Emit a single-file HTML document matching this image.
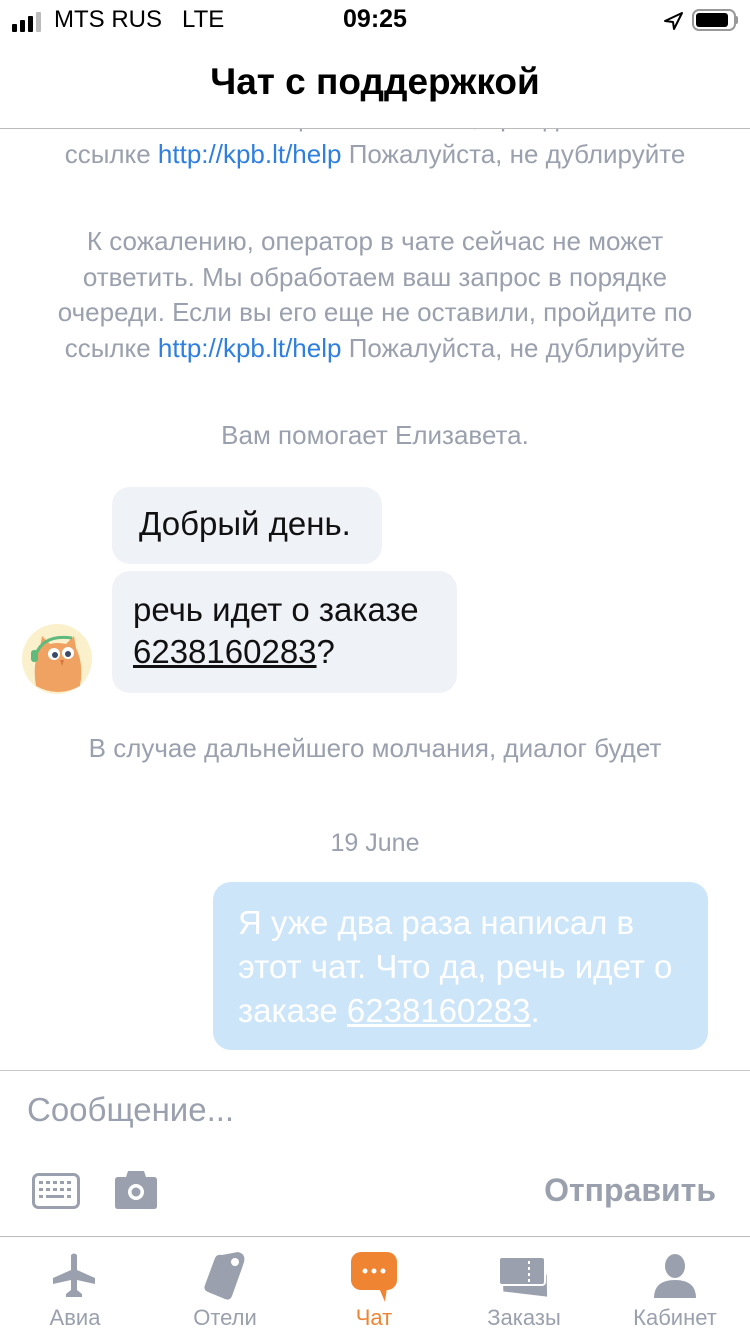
<!DOCTYPE html>
<html><head><meta charset="utf-8"><style>
*{margin:0;padding:0;box-sizing:border-box}
body{width:750px;height:1334px;background:#fff;font-family:"Liberation Sans","DejaVu Sans",sans-serif;position:relative;overflow:hidden}
.abs{position:absolute}
.sys{position:absolute;left:0;width:750px;text-align:center;color:#9aa0ad;font-size:26px;line-height:35.5px;white-space:nowrap}
.sys a{color:#2f7fe0;text-decoration:none}
.bub{position:absolute;background:#eff2f7;border-radius:18px;font-size:33px;line-height:42px;color:#111;white-space:nowrap}
.tab{position:absolute;top:1305px;width:150px;text-align:center;font-size:22px;color:#9aa0ad}
</style></head><body>
<!-- chat -->
<div class="sys" style="top:100px">Если вы его еще не оставили, пройдите по</div>
<div class="abs" style="left:0;top:0;width:750px;height:128px;background:#fff"></div>
<!-- status bar -->
<div class="abs" style="left:12px;top:12px;display:flex;align-items:flex-end;gap:3px">
<div style="width:5px;height:8px;background:#000;border-radius:1px"></div>
<div style="width:5px;height:12px;background:#000;border-radius:1px"></div>
<div style="width:5px;height:16px;background:#000;border-radius:1px"></div>
<div style="width:5px;height:20px;background:#bbb;border-radius:1px"></div>
</div>
<div class="abs" style="left:54px;top:6px;font-size:24px;color:#000">MTS RUS&nbsp;&nbsp; LTE</div>
<div class="abs" style="left:0;width:750px;text-align:center;top:5px;font-size:25px;font-weight:bold;color:#000">09:25</div>
<svg class="abs" style="left:662px;top:11px" width="22" height="20" viewBox="0 0 22 20"><path d="M20 2 L3 10 L11 11 L12 18 Z" fill="none" stroke="#000" stroke-width="2" stroke-linejoin="round"/></svg>
<div class="abs" style="left:692px;top:9px;width:44px;height:22px;border:2px solid #999;border-radius:7px"><div style="margin:2px;width:32px;height:14px;background:#000;border-radius:3px"></div></div>
<div class="abs" style="left:735px;top:16px;width:3px;height:8px;background:#999;border-radius:0 2px 2px 0"></div>
<!-- header -->
<div class="abs" style="left:0;width:750px;top:61px;text-align:center;font-size:37px;font-weight:bold;color:#000">Чат с поддержкой</div>
<div class="abs" style="left:0;top:128px;width:750px;height:1px;background:#bbb"></div>
<div class="sys" style="top:137px">ссылке <a>http://kpb.lt/help</a> Пожалуйста, не дублируйте</div>
<div class="sys" style="top:224px">К сожалению, оператор в чате сейчас не может<br>ответить. Мы обработаем ваш запрос в порядке<br>очереди. Если вы его еще не оставили, пройдите по<br>ссылке <a>http://kpb.lt/help</a> Пожалуйста, не дублируйте</div>
<div class="sys" style="top:418px">Вам помогает Елизавета.</div>
<div class="bub" style="left:112px;top:487px;width:270px;height:77px;padding:16px 0 0 27px">Добрый день.</div>
<div class="bub" style="left:112px;top:571px;width:345px;height:122px;padding:18px 0 0 21px">речь идет о заказе<br><span style="text-decoration:underline">6238160283</span>?</div>
<svg class="abs" style="left:22px;top:624px" width="70" height="70" viewBox="0 0 70 70">
<circle cx="35" cy="35" r="35" fill="#fbf0cc"/>
<path d="M14 62 Q10 40 18 24 L20 12 L28 20 Q35 18 44 20 L52 12 L54 24 Q62 40 58 62 Q36 74 14 62Z" fill="#f0a263"/>
<path d="M14 30 Q22 10 50 14" fill="none" stroke="#5fba7d" stroke-width="3"/>
<rect x="9" y="26" width="7" height="12" rx="3" fill="#5fba7d"/>
<circle cx="32" cy="30" r="6" fill="#fff"/><circle cx="46" cy="29" r="6" fill="#fff"/>
<circle cx="33" cy="31" r="3" fill="#3b4a66"/><circle cx="46" cy="30" r="3" fill="#3b4a66"/>
<path d="M38 36 L40 42 L42 36Z" fill="#d5783f"/>
</svg>
<div class="sys" style="top:731px">В случае дальнейшего молчания, диалог будет</div>
<div class="sys" style="top:826px;font-size:25px">19 June</div>
<div class="bub" style="left:213px;top:882px;width:495px;height:168px;background:#cce5f8;color:#fff;padding:19px 0 0 25px;line-height:44px">Я уже два раза написал в<br>этот чат. Что да, речь идет о<br>заказе <span style="text-decoration:underline">6238160283</span>.</div>
<!-- input -->
<div class="abs" style="left:0;top:1070px;width:750px;height:1px;background:#c8c8c8"></div>
<div class="abs" style="left:27px;top:1091px;font-size:33px;color:#9aa0ad">Сообщение...</div>
<svg class="abs" style="left:32px;top:1173px" width="48" height="36" viewBox="0 0 48 36"><rect x="1.5" y="1.5" width="45" height="33" rx="5" fill="none" stroke="#9aa0ad" stroke-width="3"/><g fill="#9aa0ad"><rect x="7" y="8" width="4" height="3"/><rect x="14" y="8" width="4" height="3"/><rect x="21" y="8" width="4" height="3"/><rect x="28" y="8" width="4" height="3"/><rect x="35" y="8" width="4" height="3"/><rect x="7" y="15" width="4" height="3"/><rect x="14" y="15" width="4" height="3"/><rect x="21" y="15" width="4" height="3"/><rect x="28" y="15" width="4" height="3"/><rect x="35" y="15" width="4" height="3"/><rect x="7" y="22" width="4" height="3"/><rect x="14" y="22" width="18" height="3"/><rect x="35" y="22" width="4" height="3"/></g></svg>
<svg class="abs" style="left:115px;top:1171px" width="42" height="38" viewBox="0 0 42 38"><path d="M3 6 H11 L13 0 H29 L31 6 H39 Q42 6 42 9 V35 Q42 38 39 38 H3 Q0 38 0 35 V9 Q0 6 3 6Z" fill="#9aa0ad"/><circle cx="21" cy="21" r="8" fill="#fff"/><circle cx="21" cy="21" r="4.5" fill="#9aa0ad"/></svg>
<div class="abs" style="right:34px;top:1172px;font-size:32px;font-weight:bold;color:#9aa0ad">Отправить</div>
<div class="abs" style="left:0;top:1236px;width:750px;height:1px;background:#bbb"></div>
<!-- tabs -->
<svg class="abs" style="left:52px;top:1253px" width="44" height="44" viewBox="0 0 44 44"><path d="M19 2 Q22 -1 25 2 V17 L43 25 V31 L25 27 V37 L30 41 V44 H14 V41 L19 37 V27 L1 31 V25 L19 17Z" fill="#9aa0ad"/></svg>
<svg class="abs" style="left:202px;top:1250px" width="46" height="52" viewBox="0 0 46 52"><path d="M36 2 Q44 4 42 12 L40 18 L30 46 Q28 51 23 49 L6 42 Q1 40 3 35 L13 8 Q15 4 20 5 Z" fill="#9aa0ad"/><circle cx="33" cy="12" r="4" fill="#fff"/></svg>
<svg class="abs" style="left:351px;top:1252px" width="46" height="50" viewBox="0 0 46 50"><rect x="0" y="0" width="46" height="38" rx="10" fill="#ef8433"/><path d="M28 36 L34 50 L36 36Z" fill="#ef8433"/><circle cx="14" cy="19" r="2.5" fill="#fff"/><circle cx="23" cy="19" r="2.5" fill="#fff"/><circle cx="32" cy="19" r="2.5" fill="#fff"/></svg>
<svg class="abs" style="left:498px;top:1253px" width="54" height="44" viewBox="0 0 54 44"><path d="M4 22 L48 20 L50 42 L6 40Z" fill="#9aa0ad" transform="rotate(4 27 30)"/><rect x="1" y="4" width="46" height="28" rx="3" fill="#9aa0ad" stroke="#fff" stroke-width="2"/><g fill="#fff"><rect x="30" y="8" width="2" height="3"/><rect x="30" y="14" width="2" height="3"/><rect x="30" y="20" width="2" height="3"/><rect x="30" y="26" width="2" height="3"/></g></svg>
<svg class="abs" style="left:653px;top:1254px" width="44" height="44" viewBox="0 0 44 44"><ellipse cx="22" cy="12" rx="10" ry="12" fill="#9aa0ad"/><path d="M1 44 Q1 26 22 26 Q43 26 43 44Z" fill="#9aa0ad"/></svg>
<div class="tab" style="left:0">Авиа</div>
<div class="tab" style="left:150px">Отели</div>
<div class="tab" style="left:299px;color:#ef8433">Чат</div>
<div class="tab" style="left:449px">Заказы</div>
<div class="tab" style="left:600px">Кабинет</div>
</body></html>
